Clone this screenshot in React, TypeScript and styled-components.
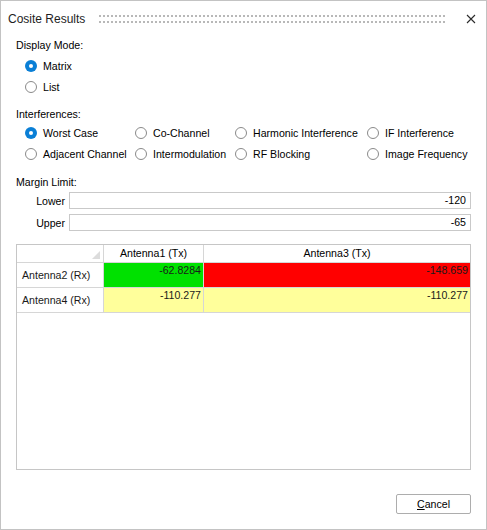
import styled, { createGlobalStyle } from "styled-components";

const GlobalStyle = createGlobalStyle`
  html, body {
    margin: 0;
    padding: 0;
    background: #ffffff;
  }
  body {
    font-family: "Liberation Sans", Arial, sans-serif;
    font-size: 10.6px;
    color: #000000;
  }
`;

const Window = styled.div`
  width: 487px;
  height: 530px;
  box-sizing: border-box;
  border: 1px solid #c3c3c3;
  background: #ffffff;
  display: flex;
  flex-direction: column;
`;

const TitleBar = styled.div`
  height: 36px;
  display: flex;
  align-items: center;
  padding: 0 10px 0 7px;
  gap: 14px;
`;

const Title = styled.div`
  font-size: 12px;
  color: #1e1e1e;
`;

const Grip = styled.svg`
  flex: 1;
  height: 9px;
  margin-right: 6px;
`;

const CloseButton = styled.button`
  border: none;
  background: none;
  padding: 0;
  width: 10px;
  height: 10px;
  display: flex;
  cursor: pointer;
`;

const Body = styled.div`
  flex: 1;
  display: flex;
  flex-direction: column;
  padding: 0 15px;
`;

const SectionLabel = styled.div<{ $top?: number }>`
  line-height: 16px;
  margin-top: ${(p) => p.$top ?? 0}px;
`;

const RadioStack = styled.div`
  display: flex;
  flex-direction: column;
  padding-left: 9px;
  margin-top: 2px;
`;

const RadioGrid = styled.div`
  display: grid;
  grid-template-columns: 110px 100px 132px 1fr;
  padding-left: 9px;
`;

const RadioItem = styled.label`
  display: flex;
  align-items: center;
  gap: 6px;
  height: 21px;
  white-space: nowrap;
`;

const RadioDot = styled.span<{ $checked?: boolean }>`
  width: 12px;
  height: 12px;
  box-sizing: border-box;
  border-radius: 50%;
  border: ${(p) => (p.$checked ? "none" : "1px solid #8a8a8a")};
  background: ${(p) => (p.$checked ? "#0a7fd6" : "#ffffff")};
  display: flex;
  align-items: center;
  justify-content: center;
  &::after {
    content: "";
    width: 4px;
    height: 4px;
    border-radius: 50%;
    background: #ffffff;
    display: ${(p) => (p.$checked ? "block" : "none")};
  }
`;

const LimitRows = styled.div`
  display: flex;
  flex-direction: column;
  gap: 5px;
  margin-top: 2px;
`;

const LimitRow = styled.div`
  display: grid;
  grid-template-columns: 49px 1fr;
  gap: 4px;
  align-items: center;
`;

const LimitLabel = styled.span`
  text-align: right;
`;

const NumberBox = styled.div`
  height: 17px;
  box-sizing: border-box;
  border: 1px solid #c9c9c9;
  text-align: right;
  padding: 0 4px;
  line-height: 15px;
`;

const DataGrid = styled.div`
  margin-top: 13px;
  height: 226px;
  box-sizing: border-box;
  border: 1px solid #c6c6c6;
  display: grid;
  grid-template-columns: 87px 100px 1fr;
  grid-template-rows: 18px 25px 25px;
  align-content: start;
`;

const CornerCell = styled.div`
  position: relative;
  border-right: 1px solid #d6d6d6;
  border-bottom: 1px solid #d6d6d6;
  &::after {
    content: "";
    position: absolute;
    right: 3px;
    bottom: 3px;
    width: 0;
    height: 0;
    border-left: 8px solid transparent;
    border-bottom: 8px solid #dcdcdc;
  }
`;

const HeaderCell = styled.div`
  border-right: 1px solid #d6d6d6;
  border-bottom: 1px solid #d6d6d6;
  text-align: center;
  line-height: 17px;
  &:nth-child(3) {
    border-right: none;
  }
`;

const RowHeader = styled.div`
  border-right: 1px solid #d6d6d6;
  border-bottom: 1px solid #d6d6d6;
  display: flex;
  align-items: center;
  padding-left: 5px;
  color: #1a1a1a;
`;

const ValueCell = styled.div<{ $bg: string; $last?: boolean }>`
  background: ${(p) => p.$bg};
  border-right: ${(p) => (p.$last ? "none" : "1px solid #d6d6d6")};
  border-bottom: 1px solid #d6d6d6;
  text-align: right;
  padding: 1px 2px 0 0;
  line-height: 13px;
  color: #1a1a1a;
`;

const Footer = styled.div`
  display: flex;
  justify-content: flex-end;
  margin-top: 24px;
`;

const Button = styled.button`
  width: 75px;
  height: 20px;
  box-sizing: border-box;
  border: 1px solid #adadad;
  border-radius: 2px;
  background: #ffffff;
  font-family: "Liberation Sans", Arial, sans-serif;
  font-size: 10.6px;
  color: #000000;
  padding: 0;
`;

const interferences = [
  ["Worst Case", "Co-Channel", "Harmonic Interference", "IF Interference"],
  ["Adjacent Channel", "Intermodulation", "RF Blocking", "Image Frequency"],
];

const GREEN = "#00e100";
const RED = "#ff0000";
const YELLOW = "#ffff9b";

const rows = [
  { name: "Antenna2 (Rx)", values: [{ v: "-62.8284", bg: GREEN }, { v: "-148.659", bg: RED }] },
  { name: "Antenna4 (Rx)", values: [{ v: "-110.277", bg: YELLOW }, { v: "-110.277", bg: YELLOW }] },
];

function Radio({ label, checked }: { label: string; checked?: boolean }) {
  return (
    <RadioItem>
      <RadioDot $checked={checked} />
      <span>{label}</span>
    </RadioItem>
  );
}

export default function App() {
  return (
    <>
      <GlobalStyle />
      <Window>
        <TitleBar>
          <Title>Cosite Results</Title>
          <Grip>
            <defs>
              <pattern id="grip" width="4" height="6" patternUnits="userSpaceOnUse">
                <rect x="0" y="0" width="2" height="2" fill="#b8b8b8" />
              </pattern>
            </defs>
            <rect x="0" y="0" width="100%" height="9" fill="url(#grip)" />
          </Grip>
          <CloseButton aria-label="Close">
            <svg width="10" height="10" viewBox="0 0 10 10">
              <path d="M1 1 L9 9 M9 1 L1 9" stroke="#2b2b2b" strokeWidth="1.1" />
            </svg>
          </CloseButton>
        </TitleBar>
        <Body>
          <SectionLabel>Display Mode:</SectionLabel>
          <RadioStack>
            <Radio label="Matrix" checked />
            <Radio label="List" />
          </RadioStack>

          <SectionLabel $top={9}>Interferences:</SectionLabel>
          <RadioGrid>
            {interferences.flat().map((name) => (
              <Radio key={name} label={name} checked={name === "Worst Case"} />
            ))}
          </RadioGrid>

          <SectionLabel $top={10}>Margin Limit:</SectionLabel>
          <LimitRows>
            <LimitRow>
              <LimitLabel>Lower</LimitLabel>
              <NumberBox>-120</NumberBox>
            </LimitRow>
            <LimitRow>
              <LimitLabel>Upper</LimitLabel>
              <NumberBox>-65</NumberBox>
            </LimitRow>
          </LimitRows>

          <DataGrid>
            <CornerCell />
            <HeaderCell>Antenna1 (Tx)</HeaderCell>
            <HeaderCell>Antenna3 (Tx)</HeaderCell>
            {rows.map((r) => [
              <RowHeader key={r.name}>{r.name}</RowHeader>,
              ...r.values.map((c, i) => (
                <ValueCell key={r.name + i} $bg={c.bg} $last={i === r.values.length - 1}>
                  {c.v}
                </ValueCell>
              )),
            ])}
          </DataGrid>

          <Footer>
            <Button>
              <u>C</u>ancel
            </Button>
          </Footer>
        </Body>
      </Window>
    </>
  );
}
